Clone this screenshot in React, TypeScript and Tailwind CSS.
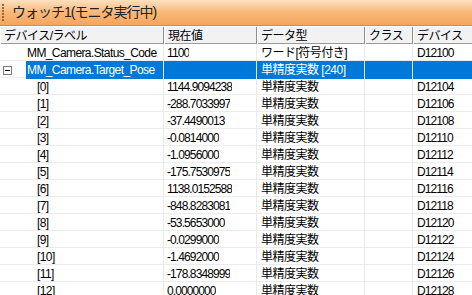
import React from 'react'

type Row = { label: string; value: string; type: string; device: string; indent?: boolean; selected?: boolean; expander?: boolean }

const values = [
  '1144.9094238', '-288.7033997', '-37.4490013', '-0.0814000', '-1.0956000', '-175.7530975',
  '1138.0152588', '-848.8283081', '-53.5653000', '-0.0299000', '-1.4692000', '-178.8348999', '0.0000000',
]

const rows: Row[] = [
  { label: 'MM_Camera.Status_Code', value: '1100', type: 'ワード[符号付き]', device: 'D12100' },
  { label: 'MM_Camera.Target_Pose', value: '', type: '単精度実数 [240]', device: '', selected: true, expander: true },
  ...values.map((v, i) => ({
    label: `[${i}]`,
    value: v,
    type: '単精度実数',
    device: `D${12104 + i * 2}`,
    indent: true,
  })),
]

const font = { fontFamily: '"Liberation Sans", "Noto Sans CJK JP", sans-serif' }

const App: React.FC = () => {
  return (
    <div className="w-[472px] h-[295px] overflow-hidden bg-white text-[12px] text-black" style={font}>
      {/* Title bar */}
      <div className="h-[26px] flex items-center bg-gradient-to-b from-[#fde0c0] via-[#f9b779] to-[#f6a55c] border-b border-[#d98b45]">
        <div className="ml-[2px] w-[2px] h-[17px] flex flex-col justify-between">
          {Array.from({ length: 6 }).map((_, i) => (
            <div key={i} className="w-[2px] h-[2px] bg-[#9a6a3c]" />
          ))}
        </div>
        <span className="ml-[8px] text-[14px] tracking-[-1px] text-[#222]">ウォッチ1(モニタ実行中)</span>
      </div>

      {/* Header */}
      <div className="grid grid-cols-[164px_93px_108px_48px_1fr] h-[18px] bg-[#f2f2f2] border-b border-[#9a9a9a] border-t border-t-white">
        {['デバイス/ラベル', '現在値', 'データ型', 'クラス', 'デバイス'].map((h, i) => (
          <div key={i} className={`flex items-center pl-[3px] border-l border-l-white ${i < 4 ? 'border-r border-r-[#8c8c8c]' : ''}`}>
            <span className="tracking-[-0.5px]">{h}</span>
          </div>
        ))}
      </div>

      {/* Body */}
      <div className="border-b border-[#a0a0a0]">
        {rows.map((r, i) => (
          <div key={i} className="grid grid-cols-[164px_93px_108px_48px_1fr] h-[17px] border-b border-[#ebebeb]">
            <div className="flex items-center border-r border-[#ebebeb]">
              <div className="w-[26px] flex items-center justify-start pl-[3px]">
                {r.expander && (
                  <div className="w-[9px] h-[9px] border border-[#7a7a7a] bg-white flex items-center justify-center">
                    <div className="w-[5px] h-[1px] bg-black" />
                  </div>
                )}
              </div>
              <div className={`h-full flex-1 flex items-center ${r.selected ? 'bg-[#0078d7] text-white' : ''} ${r.indent ? 'pl-[11px]' : 'pl-[1px]'}`}>
                <span className="tracking-[-0.6px]">{r.label}</span>
              </div>
            </div>
            <div className={`flex items-center pl-[3px] border-r ${r.selected ? 'bg-[#0078d7] border-[#e6e6e6]' : 'border-[#ebebeb]'}`}>
              <span className="tracking-[-0.9px] whitespace-nowrap overflow-hidden">{r.value}</span>
            </div>
            <div className={`flex items-center pl-[4px] border-r ${r.selected ? 'bg-[#0078d7] text-white border-[#e6e6e6]' : 'border-[#ebebeb]'}`}>
              <span className="tracking-[-0.5px] whitespace-nowrap">{r.type}</span>
            </div>
            <div className={`border-r ${r.selected ? 'bg-[#0078d7] border-[#e6e6e6]' : 'border-[#ebebeb]'}`} />
            <div className={`flex items-center pl-[4px] ${r.selected ? 'bg-[#0078d7]' : ''}`}>
              <span className="tracking-[-0.9px]">{r.device}</span>
            </div>
          </div>
        ))}
      </div>
    </div>
  )
}

export default App
